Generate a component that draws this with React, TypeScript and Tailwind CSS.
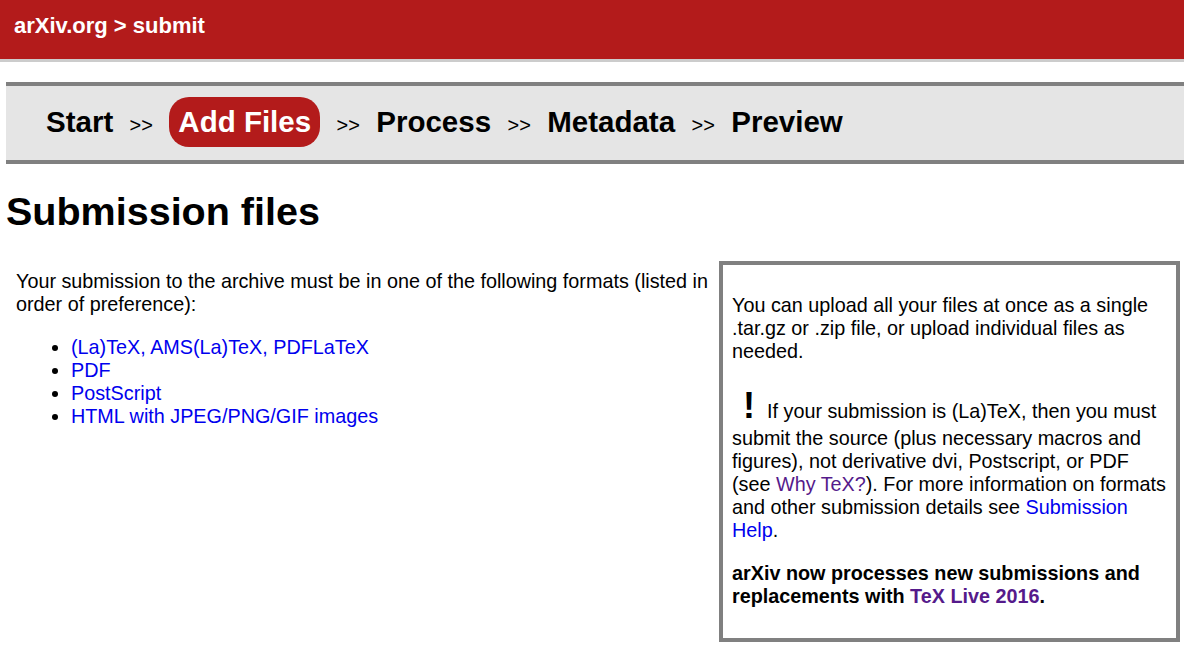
const STEPS = ["Start", "Add Files", "Process", "Metadata", "Preview"];
const ACTIVE = "Add Files";

const FORMATS = [
  "(La)TeX, AMS(La)TeX, PDFLaTeX",
  "PDF",
  "PostScript",
  "HTML with JPEG/PNG/GIF images",
];

function StepBar() {
  return (
    <div className="ml-[6px] mt-[20px] flex h-[82px] items-center border-y-4 border-[#808080] bg-[#e5e5e5] pb-[3px] pl-[40px]">
      <div className="flex items-baseline gap-[16.4px]">
        {STEPS.map((s, i) => (
          <div key={s} className="flex items-baseline gap-[16.4px]">
            {i > 0 && <span className="text-[20px]">&gt;&gt;</span>}
            {s === ACTIVE ? (
              <span className="inline-flex h-[50px] items-center rounded-[20px] bg-[#b31b1b] px-[9px] text-[29.5px] font-bold text-white">
                {s}
              </span>
            ) : (
              <span className="text-[29.5px] font-bold">{s}</span>
            )}
          </div>
        ))}
      </div>
    </div>
  );
}

export default function App() {
  return (
    <div className="min-h-[647px] bg-white font-['Liberation_Sans',Arial,sans-serif] text-[19.8px] leading-[23px] text-black">
      <header className="h-[62px] border-b-[3px] border-[#cccccc] bg-[#b31b1b] pl-[14px] pt-[13px] text-[22px] leading-[normal] font-bold text-white">
        arXiv.org &gt; submit
      </header>

      <StepBar />

      <h1 className="ml-[6px] mt-[25px] text-[39.5px] font-bold leading-[normal]">
        Submission files
      </h1>

      <div className="mt-[27px] flex pl-[16px]">
        <div className="w-[696px] pt-[9px]">
          <p>
            Your submission to the archive must be in one of the following
            formats (listed in order of preference):
          </p>
          <ul className="mt-[20px] list-disc pl-[55px]">
            {FORMATS.map((f) => (
              <li key={f}>
                <a href="#" className="text-[#0000ee]">
                  {f}
                </a>
              </li>
            ))}
          </ul>
        </div>

        <div className="ml-[7px] h-[381px] w-[461px] border-4 border-[#808080] px-[9px] pt-[29px]">
          <div className="space-y-[20px]">
            <p>
              You can upload all your files at once as a single .tar.gz or
              .zip file, or upload individual files as needed.
            </p>
            <p className="pt-[2px]">
              <span className="ml-[11px] mr-[12px] text-[36px] leading-[normal] font-bold">
                !
              </span>
              If your submission is (La)TeX, then you must submit the source
              (plus necessary macros and figures), not derivative dvi,
              Postscript, or PDF (see{" "}
              <a href="#" className="text-[#551a8b]">
                Why TeX?
              </a>
              ). For more information on formats and other submission details
              see{" "}
              <a href="#" className="text-[#0000ee]">
                Submission Help
              </a>
              .
            </p>
            <p className="font-bold">
              arXiv now processes new submissions and replacements with{" "}
              <a href="#" className="text-[#551a8b]">
                TeX Live 2016
              </a>
              .
            </p>
          </div>
        </div>
      </div>
    </div>
  );
}
